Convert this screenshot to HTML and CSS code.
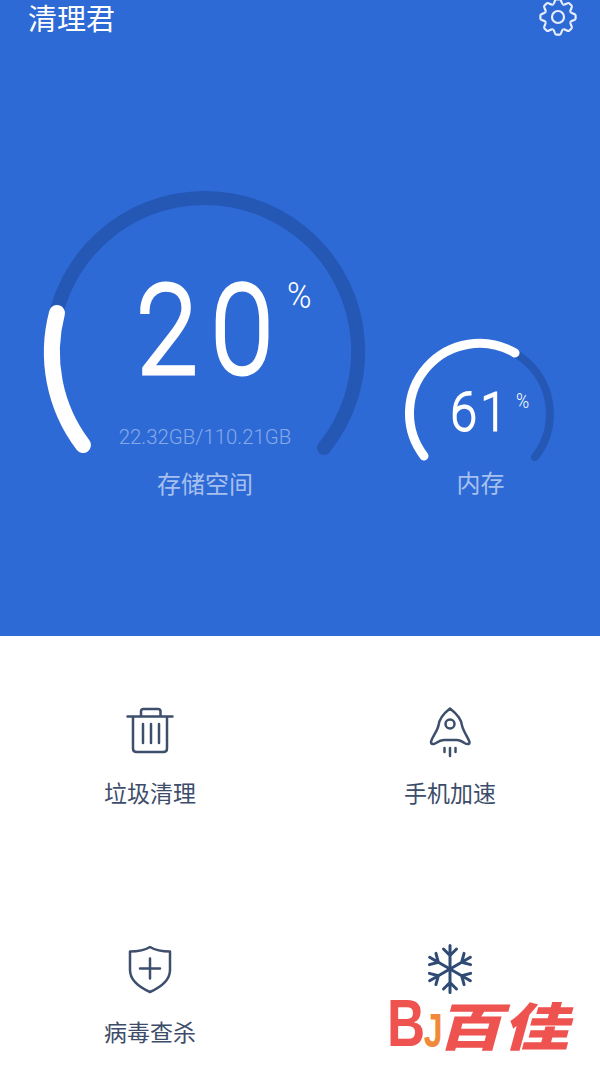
FILE: index.html
```html
<!DOCTYPE html>
<html lang="zh-CN">
    <head>
        <meta charset="UTF-8" />
        <meta name="viewport" content="width=device-width, initial-scale=1.0" />
        <title>清理君</title>

        <link rel="stylesheet" href="styles.css">
    </head>
    <body>
        <main>
            <section class="hero">
                <header class="topbar">
                    <h1>清理君</h1>
                    <svg class="gear" viewBox="-20 -20 40 40" width="40" height="40">
                        <defs>
                            <path id="lobe" d="M-5.2 -12.5C-3.2 -13 -3.6 -17.6 -1.8 -17.6H1.8C3.6 -17.6 3.2 -13 5.2 -12.5" />
                        </defs>
                        <use href="#lobe" />
                        <use href="#lobe" transform="rotate(45)" />
                        <use href="#lobe" transform="rotate(90)" />
                        <use href="#lobe" transform="rotate(135)" />
                        <use href="#lobe" transform="rotate(180)" />
                        <use href="#lobe" transform="rotate(225)" />
                        <use href="#lobe" transform="rotate(270)" />
                        <use href="#lobe" transform="rotate(315)" />
                        <circle r="6" />
                    </svg>
                </header>

                <div class="gauges">
                    <div class="gauge gauge-big">
                        <svg class="ring" viewBox="0 0 322 322" width="322" height="322">
                            <path class="track" stroke-width="14" d="M39 253A153.5 153.5 0 1 1 280 256" />
                            <path class="fill" stroke-width="16" d="M39 253A153.5 153.5 0 0 1 13 121" />
                        </svg>
                        <div class="value"><span class="num">20</span><span class="percent">%</span></div>
                        <div class="usage">22.32GB/110.21GB</div>
                        <div class="gauge-label">存储空间</div>
                    </div>

                    <div class="gauge gauge-small">
                        <svg class="ring" viewBox="0 0 149 149" width="149" height="149">
                            <path class="track" stroke-width="8" d="M18 117A70 70 0 1 1 129 118" />
                            <path class="fill" stroke-width="9" d="M18 117A70 70 0 0 1 109 14" />
                        </svg>
                        <div class="value"><span class="num">61</span><span class="percent">%</span></div>
                        <div class="gauge-label">内存</div>
                    </div>
                </div>
            </section>

            <section class="tools">
                <div class="tool">
                    <svg class="tool-icon" viewBox="0 0 48 48" width="48" height="48">
                        <path d="M1.5 10.5H46.5M15 10.5V5.5Q15 3 17.5 3H32Q34.500 3 34.500 5.500V10.500M7 10.500V42.500Q7 46 10.500 46H37.500Q41 46 41 42.500V10.500M17 18V37M25 18V37M33 18V37" />
                    </svg>
                    <span>垃圾清理</span>
                </div>
                <div class="tool">
                    <svg class="tool-icon" viewBox="0 0 48 48" width="48" height="48">
                        <path d="M24 2.500C17 8 13 14 12.500 19.500C11 26 6 31 5 36C5 38.500 7.500 38.500 10 37C13 35 15.500 34 18 34H31C33 34 35.500 35 38.500 37C41 38.500 44 38.500 43.500 36C42 31 37.500 26 36 19.500C35.500 14 31 8 24 2.500Z" />
                        <circle cx="24" cy="18" r="4.500" />
                        <path d="M18.500 42V46M24 42V50M29.500 42V46" />
                    </svg>
                    <span>手机加速</span>
                </div>
                <div class="tool">
                    <svg class="tool-icon" viewBox="0 0 48 48" width="48" height="48">
                        <path d="M24 2C19 5 11 6.500 4 6.500V25C4 35 14 42.500 24 47C34 42.500 44 35 44 25V6.500C37 6.500 29 5 24 2Z" />
                        <path d="M24 13.500V33.500M14 23.500H34" />
                    </svg>
                    <span>病毒查杀</span>
                </div>
                <div class="tool">
                    <svg class="tool-icon snow" viewBox="-24 -24 48 48" width="48" height="48">
                        <defs>
                            <path id="arm" d="M0 0V-23.500M-6.500 -20L0 -13.500L6.500 -20" />
                        </defs>
                        <use href="#arm" />
                        <use href="#arm" transform="rotate(60)" />
                        <use href="#arm" transform="rotate(120)" />
                        <use href="#arm" transform="rotate(180)" />
                        <use href="#arm" transform="rotate(240)" />
                        <use href="#arm" transform="rotate(300)" />
                    </svg>
                </div>
            </section>

            <div class="watermark">
                <span class="mark-b">B</span><span class="mark-j">J</span><span class="mark-name">百佳</span>
            </div>
        </main>
    </body>
</html>
```

FILE: styles.css
```css
html,
body {
    margin: 0px;
    padding: 0px;
    height: 100%;
}

body {
    font-family: Roboto, "Noto Sans CJK SC", sans-serif;
    background-color: #ffffff;
    overflow: hidden;
}

main {
    position: relative;
    height: 1067px;
    overflow: hidden;
}

.hero {
    height: 636px;
    background-color: #2e6ad6;
    color: #ffffff;
}

.topbar {
    height: 40px;
    display: flex;
    justify-content: space-between;
    align-items: flex-start;
    padding: 0 22px 0 28px;
}

.topbar h1 {
    margin: 0;
    font-size: 29px;
    font-weight: 400;
    line-height: 40px;
}

.gear {
    margin-top: -3px;
    fill: none;
    stroke: #e6eefb;
    stroke-width: 2.2;
}

.gauges {
    display: flex;
    align-items: flex-start;
    padding: 152px 0 0 44px;
}

.gauge {
    position: relative;
    display: flex;
    flex-direction: column;
    align-items: center;
}

.ring {
    position: absolute;
    top: 0;
    left: 0;
    fill: none;
    overflow: visible;
}

.track,
.fill {
    stroke-linecap: round;
}

.track {
    stroke: #2558b4;
}

.fill {
    stroke: #ffffff;
}

.value {
    position: relative;
}

.num {
    display: block;
    font-weight: 100;
    -webkit-text-stroke-color: #ffffff;
}

.percent {
    position: absolute;
    left: 100%;
    font-weight: 300;
    transform-origin: left center;
}

.gauge-label {
    color: #a7c0ee;
    font-size: 24px;
    line-height: 34px;
}

.gauge-big {
    width: 322px;
    height: 322px;
    padding-top: 89px;
    box-sizing: border-box;
}

.gauge-big .value {
    margin-left: 14px;
    font-size: 121px;
    line-height: 100px;
}

.gauge-big .num {
    letter-spacing: 17px;
    -webkit-text-stroke-width: 7px;
    transform: scaleX(0.9);
}

.gauge-big .percent {
    top: 1px;
    margin-left: -8px;
    font-size: 36px;
    line-height: 28px;
    transform: scaleX(0.92);
}

.usage {
    margin-top: 44px;
    color: #86a9e8;
    font-size: 20.4px;
    font-weight: 300;
    line-height: 24px;
}

.gauge-big .gauge-label {
    margin-top: 19px;
}

.gauge-small {
    width: 149px;
    height: 149px;
    margin: 147px 0 0 40px;
    padding-top: 53px;
    box-sizing: border-box;
}

.gauge-small .value {
    font-size: 51px;
    line-height: 42px;
}

.gauge-small .num {
    letter-spacing: 5px;
    -webkit-text-stroke-width: 3px;
    transform: scaleX(0.9);
}

.gauge-small .percent {
    top: 0;
    margin-left: 3px;
    font-size: 21px;
    line-height: 18px;
    transform: scaleX(0.85);
}

.gauge-small .gauge-label {
    margin-top: 33px;
}

.tools {
    display: grid;
    grid-template-columns: 300px 300px;
    grid-auto-rows: 239px;
    padding-top: 70px;
}

.tool {
    display: flex;
    flex-direction: column;
    align-items: center;
    row-gap: 25px;
    color: #3d4d69;
    font-size: 23px;
    line-height: 32px;
}

.tool-icon {
    display: block;
    overflow: visible;
    fill: none;
    stroke: #3d4f6d;
    stroke-width: 2.5;
    stroke-linecap: round;
    stroke-linejoin: round;
}

.snow {
    stroke: #2f4a73;
    stroke-width: 3;
}

.watermark {
    position: absolute;
    left: 387px;
    top: 990px;
    display: flex;
    align-items: center;
    height: 66px;
    font-weight: 700;
}

.mark-b {
    margin-right: -11px;
    color: #ef5350;
    font-family: "Liberation Sans", sans-serif;
    font-size: 66px;
    line-height: 66px;
    transform: scaleX(0.8);
    transform-origin: left center;
}

.mark-j {
    margin-top: 14px;
    color: #f0893a;
    font-family: "Liberation Sans", sans-serif;
    font-size: 34px;
    line-height: 40px;
    transform: scaleY(1.4);
}

.mark-name {
    color: #ef5350;
    font-family: "Noto Sans CJK SC", sans-serif;
    font-size: 66px;
    font-weight: 900;
    line-height: 66px;
    transform: scaleY(0.78) skewX(-12deg);
}
```
